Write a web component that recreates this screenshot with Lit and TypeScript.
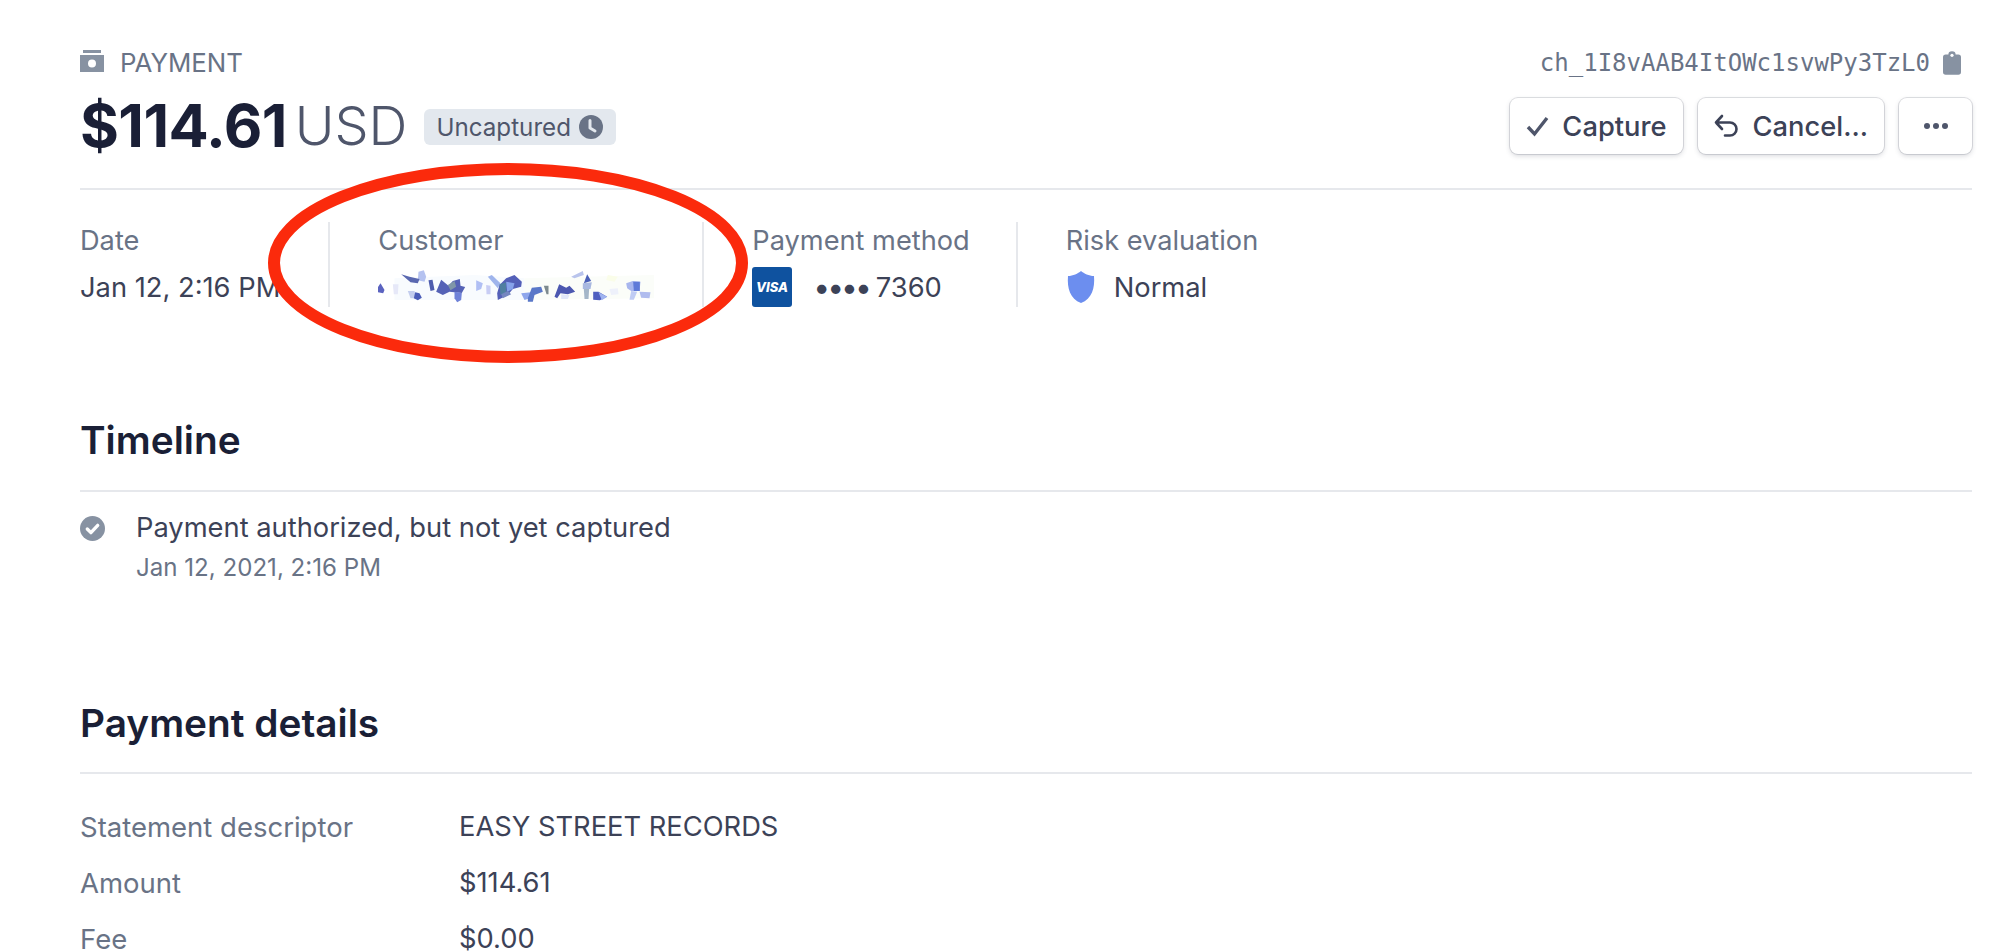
import { LitElement, css, html, svg } from "lit";
import { customElement } from "lit/decorators.js";

// smudges that hide the customer's name, [colour, points] in 3x crop units
const smudges: [string, string][] = [
  ["#f8fbfe", "60,40 300,30 450,40 450,105 60,105"],
  ["#fbfdf9", "450,40 840,30 840,100 450,105"],
  ["#fafde9", "700,30 730,35 720,50 695,45"],
  ["#5b63c0", "8,70 18,55 30,75 26,85 10,82"],
  ["#e6e8f8", "55,58 72,58 70,88 58,88"],
  ["#b5c2f0", "132,20 148,16 155,35 150,50 130,46"],
  ["#5a68b0", "80,28 105,35 135,42 130,55 108,52"],
  ["#c3cdee", "100,78 120,78 125,100 108,100"],
  ["#4a5cb8", "122,82 135,85 142,98 130,106 118,100"],
  ["#4e5cae", "162,46 174,44 180,75 168,78"],
  ["#5562b6", "185,80 200,44 222,62 235,48 256,42 258,62 272,66 262,84 225,80 205,90"],
  ["#7f96a8", "220,60 240,48 245,65 228,76"],
  ["#6f82d8", "240,80 262,84 260,105 248,112 240,100"],
  ["#b0bff4", "305,46 325,55 320,72 305,78"],
  ["#c8cdf4", "335,60 348,62 348,88 336,88"],
  ["#9fb4ec", "340,35 352,30 378,55 370,70"],
  ["#5460b8", "395,40 420,30 442,50 440,65 415,72 400,90 370,105 368,85 375,60"],
  ["#4f7fa0", "375,58 395,52 395,82 378,90"],
  ["#86a2ea", "395,50 420,55 415,72 398,80"],
  ["#7386c0", "380,88 400,78 410,88 385,100"],
  ["#8ea6ec", "440,85 470,82 465,100 450,105"],
  ["#5a78c8", "460,100 472,68 500,65 505,80 480,90 475,110 460,110"],
  ["#7d8a8e", "508,62 522,62 522,88 516,88"],
  ["#4c58b0", "540,95 554,58 575,68 585,62 602,80 580,88 558,85 548,100"],
  ["#e0e6f8", "560,88 585,90 580,102 560,102"],
  ["#b9c4ec", "590,35 625,18 628,30 600,40"],
  ["#4b60b8", "638,28 650,48 628,55"],
  ["#a8b8e0", "625,55 652,52 648,72 625,72"],
  ["#a4b6c8", "628,72 644,72 642,102 630,102"],
  ["#5060c0", "656,80 672,80 698,95 676,106 656,104"],
  ["#a0b4f0", "672,82 698,95 682,106"],
  ["#eef1fb", "705,72 730,70 732,88 710,90"],
  ["#a8b6ee", "755,55 775,48 798,50 795,78 770,78 758,70"],
  ["#5f7ad8", "776,50 796,50 796,78 778,78"],
  ["#b0bcee", "795,80 828,82 825,100 800,98"],
  ["#c0ccf4", "770,78 788,80 778,104 765,104"],
];

@customElement("app-root")
export class AppRoot extends LitElement {
  static styles = css`
    :host {
      display: block;
      position: relative;
      height: 952px;
      overflow: hidden;
      background: #fff;
      padding: 0 28px 0 80px;
      box-sizing: border-box;
      font-family: Inter, "Liberation Sans", sans-serif;
      color: #3c4257;
    }
    .top {
      display: flex;
      justify-content: space-between;
      align-items: flex-start;
      height: 188px;
      border-bottom: 2px solid #e6e8ec;
      box-sizing: content-box;
    }
    .kind {
      display: flex;
      align-items: center;
      gap: 16px;
      height: 28px;
      margin-top: 48px;
      font-size: 25.800px;
      color: #697386;
    }
    .kind svg {
      width: 24px;
      height: 24px;
      margin-top: -2px;
    }
    .amount {
      display: flex;
      align-items: center;
      margin-top: 16px;
      height: 66px;
    }
    .value {
      font-size: 59.500px;
      font-weight: 700;
      letter-spacing: -0.6px;
      color: #1a1f36;
    }
    .currency {
      font-size: 54px;
      font-weight: 300;
      color: #4f566b;
      margin-left: 8px;
    }
    .badge {
      display: flex;
      align-items: center;
      gap: 8px;
      height: 36px;
      margin: 4px 0 0 17px;
      padding: 0 13px 0 12px;
      border-radius: 6px;
      background: #e3e8ee;
      font-size: 24.200px;
      color: #4f566b;
    }
    .badge svg {
      width: 24px;
      height: 24px;
    }
    .side {
      display: flex;
      flex-direction: column;
      align-items: flex-end;
    }
    .charge {
      display: flex;
      align-items: center;
      gap: 13px;
      height: 28px;
      margin-top: 49px;
      padding-right: 11px;
      font-family: "DejaVu Sans Mono", monospace;
      font-size: 24px;
      color: #697386;
    }
    .charge svg {
      width: 18px;
      height: 24px;
    }
    .actions {
      display: flex;
      gap: 15px;
      margin-top: 21px;
    }
    .btn {
      display: flex;
      align-items: center;
      gap: 12px;
      height: 56px;
      padding: 0 16px 0 15px;
      box-sizing: border-box;
      border-radius: 8px;
      background: #fff;
      box-shadow: 0 0 0 1px rgba(60, 66, 87, 0.16), 0 2px 5px rgba(60, 66, 87, 0.2);
      font-size: 27.300px;
      font-weight: 500;
      color: #3c4257;
    }
    .btn svg {
      width: 26px;
      height: 26px;
    }
    .btn.capture {
      gap: 11px;
    }
    .btn.cancel {
      gap: 14px;
    }
    .btn.more {
      padding: 0 23.500px;
    }
    .stats {
      display: flex;
      margin-top: 32px;
    }
    .stat {
      height: 85px;
      padding-right: 48px;
      border-right: 2px solid #e6e8ec;
      margin-right: 48px;
    }
    .stat.method {
      padding-right: 46px;
    }
    .stat:last-child {
      border-right: 0;
    }
    .label {
      font-size: 27.200px;
      line-height: 34px;
      padding-top: 2px;
      color: #697386;
    }
    .data {
      display: flex;
      align-items: center;
      height: 40px;
      margin-top: 9px;
      font-size: 27.300px;
      color: #3c4257;
    }
    .name {
      width: 276px;
      height: 45px;
      flex: none;
      filter: blur(0.5px);
    }
    .visa {
      width: 40px;
      height: 40px;
      margin-right: 21px;
    }
    .dots {
      font-size: 30px;
      letter-spacing: -3px;
      margin-right: 7px;
    }
    .shield {
      width: 30px;
      height: 34px;
      margin-right: 18px;
    }
    h2 {
      margin: 0;
      font-size: 38.800px;
      font-weight: 600;
      line-height: 46px;
      color: #1a1f36;
    }
    .section {
      border-bottom: 2px solid #e6e8ec;
      padding-bottom: 27px;
    }
    .timeline-head {
      margin-top: 110px;
    }
    .event {
      display: flex;
      gap: 32px;
      margin-top: 18px;
    }
    .event svg {
      width: 25px;
      height: 25px;
      margin-top: 6px;
      flex: none;
    }
    .event-title {
      margin-left: -1px;
      font-size: 27.300px;
      line-height: 36px;
      color: #3c4257;
    }
    .event-date {
      margin-top: 7px;
      margin-left: -1px;
      font-size: 24.100px;
      line-height: 30px;
      color: #697386;
    }
    .details-head {
      margin-top: 117px;
      padding-bottom: 26px;
    }
    .rows {
      display: grid;
      grid-template-columns: 379px 1fr;
      grid-auto-rows: 56px;
      align-items: center;
      margin-top: 25px;
      font-size: 27.300px;
      line-height: 22px;
    }
    .rows .key {
      font-size: 27.500px;
      color: #697386;
    }
    .ring {
      position: absolute;
      left: 265px;
      top: 161px;
      width: 486px;
      height: 204px;
      pointer-events: none;
    }
  `;

  render() {
    return html`
      <div class="top">
        <div>
          <div class="kind">
            <svg viewBox="0 0 24 24">
              <path fill="#8792a2" d="M3 1h18v3H3z" />
              <path fill="#8792a2" fill-rule="evenodd" d="M0 6h24v17H0zM12 10.500a4 4 0 1 0 0 8 4 4 0 0 0 0-8z" />
            </svg>
            PAYMENT
          </div>
          <div class="amount">
            <span class="value">$114.61</span>
            <span class="currency">USD</span>
            <span class="badge">
              Uncaptured
              <svg viewBox="0 0 24 24">
                <circle cx="12" cy="12" r="12" fill="#697386" />
                <path fill="none" stroke="#e3e8ee" stroke-width="3" stroke-linecap="round" stroke-linejoin="round" d="M11 5.500V13l5 3" />
              </svg>
            </span>
          </div>
        </div>
        <div class="side">
          <div class="charge">
            ch_1I8vAAB4ItOWc1svwPy3TzL0
            <svg viewBox="0 0 20 26">
              <path fill="#8792a2" d="M6 3.500a4 3.500 0 0 1 8 0h3a3 3 0 0 1 3 3V23a3 3 0 0 1-3 3H3a3 3 0 0 1-3-3V6.500a3 3 0 0 1 3-3z" />
              <circle cx="10" cy="4.500" r="1.800" fill="#fff" />
            </svg>
          </div>
          <div class="actions">
            <div class="btn capture">
              <svg viewBox="0 0 26 26">
                <path fill="none" stroke="#4f566b" stroke-width="3.400" d="M3 14l6.500 7L22 5" />
              </svg>
              Capture
            </div>
            <div class="btn cancel">
              <svg viewBox="0 0 26 26">
                <path fill="none" stroke="#3c4257" stroke-width="2.600" stroke-linecap="round" stroke-linejoin="round" d="M9 3L3 9.500l6 6.500M3 9.500h14a6.500 6.500 0 0 1 0 13h-5" />
              </svg>
              Cancel...
            </div>
            <div class="btn more">
              <svg viewBox="0 0 26 26">
                <circle cx="4" cy="13" r="3" fill="#4f566b" />
                <circle cx="13" cy="13" r="3" fill="#4f566b" />
                <circle cx="22" cy="13" r="3" fill="#4f566b" />
              </svg>
            </div>
          </div>
        </div>
      </div>

      <div class="stats">
        <div class="stat">
          <div class="label">Date</div>
          <div class="data">Jan 12, 2:16 PM</div>
        </div>
        <div class="stat">
          <div class="label">Customer</div>
          <div class="data">
            <svg class="name" viewBox="12 0 825 135">
              ${smudges.map(([fill, points]) => svg`<polygon fill=${fill} points=${points} />`)}
            </svg>
          </div>
        </div>
        <div class="stat method">
          <div class="label">Payment method</div>
          <div class="data">
            <svg class="visa" viewBox="0 0 40 40">
              <rect width="40" height="40" rx="3" fill="#0f529f" />
              <text x="20" y="25" text-anchor="middle" fill="#fff" font-family="Inter, sans-serif" font-size="13" font-weight="800" font-style="italic">VISA</text>
            </svg>
            <span class="dots">••••</span>7360
          </div>
        </div>
        <div class="stat">
          <div class="label">Risk evaluation</div>
          <div class="data">
            <svg class="shield" viewBox="0 0 30 34">
              <path fill="#6c8eef" d="M15 1c3 2.500 8 5 13 5 1 12-2 23-13 27C4 29 1 18 2 6c5 0 10-2.500 13-5z" />
            </svg>
            Normal
          </div>
        </div>
      </div>

      <div class="section timeline-head"><h2>Timeline</h2></div>
      <div class="event">
        <svg viewBox="0 0 24 24">
          <circle cx="12" cy="12" r="12" fill="#8792a2" />
          <path fill="none" stroke="#fff" stroke-width="3.200" stroke-linecap="round" stroke-linejoin="round" d="M7 12.500l3.500 3.500L17 9" />
        </svg>
        <div>
          <div class="event-title">Payment authorized, but not yet captured</div>
          <div class="event-date">Jan 12, 2021, 2:16 PM</div>
        </div>
      </div>

      <div class="section details-head"><h2>Payment details</h2></div>
      <div class="rows">
        <div class="key">Statement descriptor</div>
        <div>EASY STREET RECORDS</div>
        <div class="key">Amount</div>
        <div>$114.61</div>
        <div class="key">Fee</div>
        <div>$0.00</div>
      </div>

      <svg class="ring" viewBox="0 0 486 204">
        <ellipse cx="243" cy="102" rx="234" ry="94" fill="none" stroke="#fb2a0c" stroke-width="12" />
      </svg>
    `;
  }
}
